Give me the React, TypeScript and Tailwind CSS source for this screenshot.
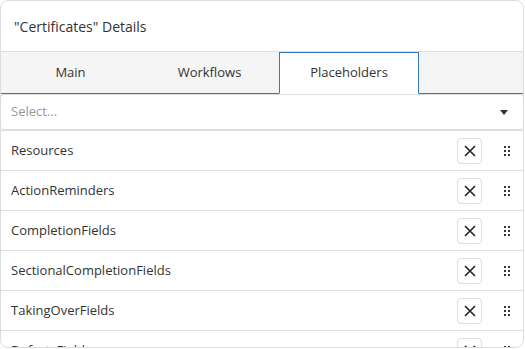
import React from 'react';

const items = [
    'Resources',
    'ActionReminders',
    'CompletionFields',
    'SectionalCompletionFields',
    'TakingOverFields',
    'DefectsFields',
];

const DragHandle: React.FC = () => (
    <svg width="8" height="12" viewBox="0 0 8 12" className="text-[#333]">
        {[0, 1].map((c) =>
            [0, 1, 2].map((r) => (
                <rect key={`${c}-${r}`} x={1 + c * 4} y={1 + r * 4} width="2" height="2" fill="currentColor" />
            ))
        )}
    </svg>
);

const App: React.FC = () => {
    const tabs = ['Main', 'Workflows', 'Placeholders'];

    return (
        <div className="w-[525px] h-[349px] overflow-hidden bg-white font-['Open_Sans',sans-serif] text-[#333]">
            <div className="w-[524px] h-[348px] border border-[#ddd] rounded-lg flex flex-col overflow-hidden">
                <div className="h-[50px] shrink-0 flex items-center px-[13px] text-[14px] text-[#333]">
                    "Certificates" Details
                </div>
                {/* tabs */}
                <div className="h-[43px] shrink-0 bg-[#f5f5f5] border-t border-[#ddd] border-b border-b-[#337ab7] flex">
                    {tabs.map((t, i) => (
                        <div
                            key={t}
                            className={
                                i === 2
                                    ? 'w-[140px] -mb-px bg-white border border-[#337ab7] border-b-white flex items-center justify-center text-[13px]'
                                    : 'w-[139px] flex items-center justify-center text-[13px]'
                            }
                        >
                            {t}
                        </div>
                    ))}
                </div>
                {/* select */}
                <div className="h-[36px] shrink-0 mx-[-1px] border border-[#ddd] rounded-[4px] flex items-center justify-between px-[10px]">
                    <span className="text-[13px] text-[#999]">Select...</span>
                    <span className="w-0 h-0 border-l-[4px] border-r-[4px] border-t-[5px] border-l-transparent border-r-transparent border-t-[#333] mr-[5px]" />
                </div>
                {/* list */}
                <div className="flex-1 min-h-0 border-t border-[#ddd] flex flex-col overflow-hidden">
                    {items.map((it) => (
                        <div key={it} className="h-[40px] shrink-0 border-b border-[#ddd] flex items-center pl-[10px] pr-[12px]">
                            <span className="flex-1 text-[13px]">{it}</span>
                            <div className="w-[25px] h-[26px] border border-[#ddd] rounded-[4px] flex items-center justify-center mr-[21px]">
                                <svg width="14" height="14" viewBox="0 0 14 14">
                                    <path d="M2 2 L12 12 M12 2 L2 12" stroke="#222" strokeWidth="1.6" />
                                </svg>
                            </div>
                            <DragHandle />
                        </div>
                    ))}
                </div>
            </div>
        </div>
    );
};

export default App;
